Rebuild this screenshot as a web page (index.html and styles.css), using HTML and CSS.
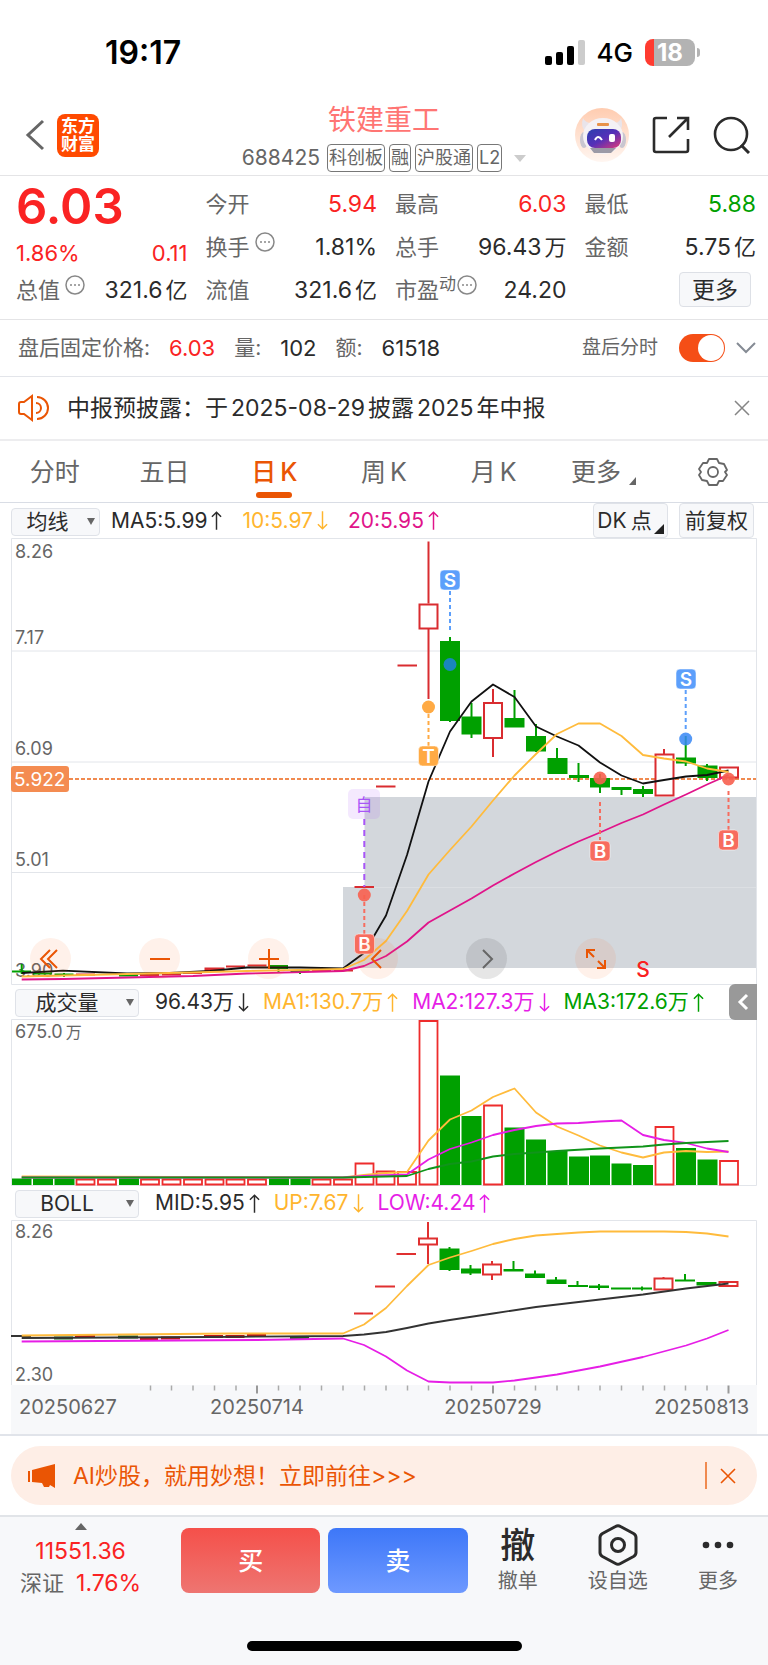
FILE: index.html
```html
<!DOCTYPE html>
<html lang="zh-CN">
<head>
<meta charset="utf-8">
<meta name="viewport" content="width=device-width, initial-scale=1">
<title>铁建重工 688425</title>
<link rel="stylesheet" href="styles.css">
</head>
<body>
<svg class="defs" aria-hidden="true">
  <symbol id="up" viewBox="0 0 12 22"><path d="M6 21V2M1 7l5-5 5 5"/></symbol>
  <symbol id="down" viewBox="0 0 12 22"><path d="M6 1v19M1 15l5 5 5-5"/></symbol>
  <symbol id="info" viewBox="0 0 20 20"><circle cx="10" cy="10" r="9"/><path d="M5 10h2M9 10h2M13 10h2"/></symbol>
</svg>

<div class="status">
  <span class="time">19:17</span>
  <div class="status-right">
    <svg class="signal" width="40" height="26" viewBox="0 0 40 26"><rect x="0" y="16" width="7" height="9" rx="2"/><rect x="11" y="12" width="7" height="13" rx="2"/><rect x="22" y="6" width="7" height="19" rx="2"/><rect x="33" y="0" width="7" height="25" rx="2" fill="#ccc"/></svg>
    <span class="net">4G</span>
    <span class="battery">18</span>
  </div>
</div>

<header class="header">
  <div class="header-left">
    <button class="icon-btn" aria-label="返回"><svg width="20" height="32" viewBox="0 0 20 32"><path d="M18 2 3 16l15 14" fill="none" stroke="#666" stroke-width="3"/></svg></button>
    <span class="logo">东方<br>财富</span>
  </div>
  <div class="header-mid">
    <h1 class="title">铁建重工</h1>
    <div class="tags"><span class="code">688425</span><span class="tag">科创板</span><span class="tag">融</span><span class="tag">沪股通</span><span class="tag">L2</span><span class="tri-down"></span></div>
  </div>
  <div class="header-right">
    <button class="icon-btn" aria-label="助手"><svg width="54" height="56" viewBox="0 0 54 56">
      <defs><linearGradient id="av" x1="0" y1="0" x2="0" y2="1"><stop offset="0" stop-color="#ffccb0"/><stop offset="1" stop-color="#fff6f1"/></linearGradient><linearGradient id="face" x1="0" y1="0" x2="1" y2="1"><stop offset="0" stop-color="#2b3fae"/><stop offset=".5" stop-color="#5530b8"/><stop offset="1" stop-color="#e03a78"/></linearGradient></defs>
      <ellipse cx="27" cy="28" rx="27" ry="27" fill="url(#av)"/>
      <path d="M8 11q-3 9 3 14l8-8Q10 16 8 11zM46 11q3 9-2 14l-8-8q9-1 10-6z" fill="#e9e4ea"/>
      <ellipse cx="9" cy="33" rx="4" ry="8" fill="#c9c6d0"/><ellipse cx="47" cy="33" rx="4" ry="8" fill="#c9c6d0"/>
      <ellipse cx="28" cy="29" rx="20" ry="18" fill="#f4f1f5"/>
      <path d="M15 41h26l-5 5H19z" fill="#9c9aa6"/>
      <rect x="12" y="22" width="34" height="19" rx="8" fill="url(#face)"/>
      <path d="M20 33q3-6 7 0" fill="none" stroke="#fff" stroke-width="2"/><rect x="34" y="27" width="6" height="8" rx="2" fill="#fff"/>
      <rect x="22" y="16" width="12" height="3" rx="1" fill="#e8924a"/></svg></button>
    <button class="icon-btn" aria-label="分享"><svg width="38" height="38" viewBox="0 0 38 38"><path d="M15 2H4a2 2 0 0 0-2 2v30a2 2 0 0 0 2 2h30a2 2 0 0 0 2-2V23M25 2h11v12M36 2 17 21" fill="none" stroke="#2b2b2b" stroke-width="2.6"/></svg></button>
    <button class="icon-btn" aria-label="搜索"><svg width="38" height="38" viewBox="0 0 38 38"><circle cx="18" cy="18" r="16" fill="none" stroke="#2b2b2b" stroke-width="2.6"/><path d="m28 29 8 8" stroke="#2b2b2b" stroke-width="3"/></svg></button>
  </div>
</header>

<section class="quote">
  <div class="price">
    <strong class="last">6.03</strong>
    <div class="change"><span>1.86%</span><span>0.11</span></div>
  </div>
  <div class="cell"><span class="lbl">今开</span><span class="red">5.94</span></div>
  <div class="cell"><span class="lbl">最高</span><span class="red">6.03</span></div>
  <div class="cell"><span class="lbl">最低</span><span class="green">5.88</span></div>
  <div class="cell"><span class="lbl">换手<svg class="info"><use href="#info"/></svg></span><span>1.81%</span></div>
  <div class="cell"><span class="lbl">总手</span><span>96.43<i>万</i></span></div>
  <div class="cell"><span class="lbl">金额</span><span>5.75<i>亿</i></span></div>
  <div class="cell"><span class="lbl">总值<svg class="info"><use href="#info"/></svg></span><span>321.6<i>亿</i></span></div>
  <div class="cell"><span class="lbl">流值</span><span>321.6<i>亿</i></span></div>
  <div class="cell"><span class="lbl">市盈<sup>动</sup><svg class="info tight"><use href="#info"/></svg></span><span>24.20</span></div>
  <div class="cell end"><button class="more">更多</button></div>
</section>

<section class="after">
  <span>盘后固定价格:</span><b class="red">6.03</b><span>量:</span><b>102</b><span>额:</span><b>61518</b>
  <label class="switch-label" for="after-switch">盘后分时</label>
  <input class="switch" type="checkbox" id="after-switch" checked>
  <button class="icon-btn" aria-label="展开"><svg width="20" height="14" viewBox="0 0 20 14"><path d="m1 2 9 9 9-9" fill="none" stroke="#858b94" stroke-width="2"/></svg></button>
</section>

<section class="notice">
  <svg width="31" height="28" viewBox="0 0 31 28" fill="none" stroke="#ea5504" stroke-width="2"><path d="M14 2v24L6 20H3a2 2 0 0 1-2-2v-8a2 2 0 0 1 2-2h3zM18 9a5 5 0 0 1 0 10M19 3a11 11 0 0 1 0 22"/></svg>
  <p>中报预披露：于<span class="num">2025-08-29</span>披露<span class="num">2025</span>年中报</p>
  <button class="icon-btn" aria-label="关闭"><svg width="16" height="16" viewBox="0 0 16 16"><path d="m1 1 14 14M15 1 1 15" stroke="#858585" stroke-width="1.5"/></svg></button>
</section>

<nav class="tabs">
  <button class="tab">分时</button>
  <button class="tab">五日</button>
  <button class="tab on">日<span class="k">K</span></button>
  <button class="tab">周<span class="k">K</span></button>
  <button class="tab">月<span class="k">K</span></button>
  <button class="tab">更多<span class="corner"></span></button>
  <button class="tab" aria-label="设置"><svg width="30" height="30" viewBox="0 0 30 30" fill="none" stroke="#666" stroke-width="1.8"><path d="M11 2h8l2 4 5 1 3 6-2 2 2 3-4 6-4 0-2 4h-8l-2-4-5-1-3-5 2-3-2-3 4-6 4 0z" stroke-linejoin="round"/><circle cx="15" cy="15" r="5"/></svg></button>
</nav>

<main class="charts">
  <div class="bar">
    <span class="pick short"><select aria-label="主图指标"><option>均线</option></select></span>
    <span class="ind">MA5:5.99<svg class="arr"><use href="#up"/></svg></span>
    <span class="ind amber">10:5.97<svg class="arr"><use href="#down"/></svg></span>
    <span class="ind pink">20:5.95<svg class="arr"><use href="#up"/></svg></span>
    <div class="bar-right"><button class="chip">DK<span class="k">点</span><span class="corner dark"></span></button><button class="chip">前复权</button></div>
  </div>

  <div class="plot">
    <svg class="chart" viewBox="11 538 746 447" role="img" aria-label="日K线">
      <g class="grid"><path d="M11.500 538.500h745v446h-745zM12 651h744M12 762h744M12 872.500h744"/></g>
      <path fill="#d3d7dc" d="M343 887h21.500v-90H756v171H343z"/><path stroke="#dcdfe3" d="M365 887.500h391"/>
      <g class="ylab"><text x="15" y="558">8.26</text><text x="15" y="644">7.17</text><text x="15" y="755">6.09</text><text x="15" y="866">5.01</text><text x="15" y="977">3.90</text></g>
      <path d="M69 779h687" stroke="#f08a50" stroke-width="2" stroke-dasharray="4 2"/>
      <g class="gfill"><path d="M440 641h20v80h-20zM461.500 716.500h20v18h-20zM504.500 718h20v9.500h-20zM526 736h20v15.500h-20zM547.500 758h20v16h-20zM569 775h20v3h-20zM590 778h20v9.500h-20zM611.500 787h20v3h-20zM633 789h20v5h-20zM676 757.500h20v6h-20zM697.500 765.500h20v12.500h-20zM12 970.500h19v2H12zM33 972.500h19v2H33zM54.500 973.500h19v2h-19zM119 974.500h19v2h-19zM269 965h19v4h-19zM290.500 970h19v2h-19z"/></g>
      <path class="gline" d="M450 637v85M471.500 703v35M514.500 690v30M536 724v28M557 748v20M578.500 763v19M600 774v19M621.500 787v8M643 786v11M685.700 736v30M707 764v17M21.700 964v10M64 973v4M278.500 965v8M300 969v5"/>
      <g class="rline" stroke-width="2"><path d="M354.500 887h19.500M376 786.500h19.500M397.500 665.500H417M428.500 541.500v62M428.500 628v71M493 689v14M493 738v19M664 749v5M76 974.500h19M140 975h19M162 974.500h19M183 973h19M226 966.500h19M247.500 965.500h19M312 971h19M334 970.500h19"/><path fill="#fff" d="M419.500 604.500h18v24h-18zM484 703h18v35h-18zM655.500 754.500h18v41h-18zM720 767.500h18v10h-18zM205.500 968.500h18v2h-18z"/></g>
      <polyline class="line" stroke="#111" points="21.700,973 63,970.700 127,973.500 170,973 210,971 247,967.500 300,967.500 343,968.500 364,953 386,915.500 407,855 428.500,781.500 450,731.500 471.500,701.500 493,684.500 514.500,697 536,726.500 557,736.500 578.500,745.500 600,762.500 621.500,775.500 643,783.500 664,780 686,776.500 707,775 728.500,770.500"/>
      <polyline class="line" stroke="#ffbb3c" points="21.700,976.500 127,974 210,972 247,971 343,969 364,960 386,941 407,911 428.500,874.500 450,850 471.500,826.500 493,800.500 514.500,775.500 536,754 557,734 578.500,723.500 600,723.500 621.500,736 643,755 664,758.500 686,761.500 707,768.500 728.500,772"/>
      <polyline class="line" stroke="#e0148a" points="21.700,979.500 63,979 193,976 247,973.500 343,971 364,966 386,956 407,941.500 428.500,922.500 450,910.500 471.500,898.500 493,885.500 514.500,873.500 536,862 557,851.500 578.500,841.500 600,832.500 621.500,823 643,814.500 664,804.500 686,794.500 707,784.500 728.500,775"/>
      <rect x="11" y="766" width="58" height="26" rx="3" fill="#f48c51"/><text x="14" y="786" font-size="19" fill="#fff">5.922</text>
      <g fill="none" stroke-width="2" stroke-dasharray="4 3"><path stroke="#5c9ffb" d="M450 591v40M685.700 690v40"/><path stroke="#ffaa44" d="M428.500 707v39"/><path stroke="#f76c5e" d="M364.300 895v40M600 802v38M728.500 791v39"/><path stroke="#a855f7" stroke-dasharray="6 5" d="M364.300 819v68"/></g>
      <circle cx="450" cy="664.500" r="6.500" fill="#1a86bc"/><circle cx="685.700" cy="739" r="6.500" fill="#3787f5" opacity=".85"/><circle cx="428.500" cy="707" r="6.500" fill="#ffaa44"/>
      <g fill="#f8604f" opacity=".9"><circle cx="364.300" cy="895" r="6.500"/><circle cx="600" cy="778" r="6.500"/><circle cx="728.500" cy="779" r="6.500"/></g>
      <g class="mark"><rect x="440" y="570" width="20" height="20" rx="4" fill="#5c9ffb"/><rect x="676" y="669" width="20" height="20" rx="4" fill="#5c9ffb"/><rect x="418.500" y="746" width="20" height="20" rx="4" fill="#ffaa44"/><rect x="354.500" y="934" width="20" height="20" rx="4" fill="#f76c5e"/><rect x="590" y="841" width="20" height="20" rx="4" fill="#f76c5e"/><rect x="718.500" y="830" width="20" height="20" rx="4" fill="#f76c5e"/>
      <text x="450" y="587">S</text><text x="686" y="686">S</text><text x="428.500" y="763">T</text><text x="364.500" y="951">B</text><text x="600" y="858">B</text><text x="728.500" y="847">B</text></g>
      <rect x="348" y="789" width="32" height="30" rx="5" fill="#a855f7" opacity=".13"/><text x="364" y="811" font-size="17" text-anchor="middle" fill="#a855f7">自</text>
      <text x="643" y="977" font-size="21" font-weight="500" text-anchor="middle" fill="#fa2020">S</text>
    </svg>
    <div class="tools">
      <button class="tool" aria-label="最左"><svg width="24" height="24" viewBox="0 0 24 24"><path d="M11 3 2 12l9 9M18 3l-9 9 9 9"/></svg></button>
      <button class="tool" aria-label="缩小"><svg width="24" height="24" viewBox="0 0 24 24"><path d="M2 12h20"/></svg></button>
      <button class="tool" aria-label="放大"><svg width="24" height="24" viewBox="0 0 24 24"><path d="M2 12h20M12 2v20"/></svg></button>
      <button class="tool" aria-label="左移"><svg width="24" height="24" viewBox="0 0 24 24"><path d="m15 3-9 9 9 9"/></svg></button>
      <button class="tool gray" aria-label="右移"><svg width="24" height="24" viewBox="0 0 24 24"><path d="m8 3 9 9-9 9"/></svg></button>
      <button class="tool" aria-label="全屏"><svg width="24" height="24" viewBox="0 0 24 24"><path d="M11 3H3v8M3 3l7 7M21 13v8h-8M21 21l-7-7"/></svg></button>
    </div>
  </div>

  <div class="bar sub">
    <span class="pick"><select aria-label="副图指标一"><option>成交量</option></select></span>
    <span class="ind">96.43万<svg class="arr"><use href="#down"/></svg></span>
    <span class="ind amber">MA1:130.7万<svg class="arr"><use href="#up"/></svg></span>
    <span class="ind violet">MA2:127.3万<svg class="arr"><use href="#down"/></svg></span>
    <span class="ind green">MA3:172.6万<svg class="arr"><use href="#up"/></svg></span>
    <button class="drawer" aria-label="展开侧栏"><svg width="12" height="18" viewBox="0 0 12 18"><path d="M10 2 3 9l7 7" fill="none" stroke="#fff" stroke-width="3"/></svg></button>
  </div>
  <svg class="chart" viewBox="11 1019 746 167" role="img" aria-label="成交量">
    <g class="grid"><path d="M11.500 1019.500h745v166h-745z"/></g>
    <g class="ylab"><text x="15" y="1038">675.0<tspan dx="3" font-size="16">万</tspan></text></g>
    <path class="gfill" d="M12 1178.500h19.500v6.500H12zM33 1178.500h20v6.500H33zM54.500 1178.500h20v6.500h-20zM119 1178.500h20v6.500h-20zM269 1178.500h20v6.500h-20zM290.500 1178.500h20v6.500h-20zM440 1075.500h20V1185h-20zM461.500 1116h20v69h-20zM504.500 1127.500h20v57.500h-20zM526 1139.500h20v45.500h-20zM547.500 1151h20v34h-20zM569 1156.500h20v28.500h-20zM590 1155.500h20v29.500h-20zM611.500 1163.500h20v21.500h-20zM633 1165h20v20h-20zM676 1148h20v37h-20zM697.500 1159.500h20v25.500h-20z"/>
    <path fill="none" stroke="#ee2c2c" stroke-width="1.800" d="M76.500 1179.500h18v5h-18zM98 1179.500h18v5H98zM141 1179.500h18v5h-18zM162.500 1179.500h18v5h-18zM184 1179.500h18v5h-18zM205.500 1179.500h18v5h-18zM226.500 1179.500h18v5h-18zM248 1179.500h18v5h-18zM312.500 1179.500h18v5h-18zM334 1179.500h18v5h-18zM355.500 1163.500h18v21h-18zM376.500 1171.500h18v13h-18zM398 1172h18v12.500h-18zM419.500 1021h18v163.500h-18zM484 1105.500h18v79h-18zM655.500 1127h18v57.500h-18zM720 1161h18v23.500h-18z"/>
    <polyline class="line" stroke="#ffbb3c" points="21.700,1176.500 343,1177.500 364,1175 386,1173 407,1172 428.500,1140.500 450,1119.500 471.500,1110.500 493,1097 514.500,1088.500 536,1112.500 557,1126.500 578.500,1135.500 600,1145.500 621.500,1152.500 643,1157.500 664,1152.500 686,1151 707,1152 728.500,1151.500"/>
    <polyline class="line" stroke="#e61ee6" points="21.700,1177.500 343,1177.500 364,1176 407,1174.500 428.500,1159.500 450,1149 471.500,1142.500 493,1135 514.500,1130 536,1126 557,1123.500 578.500,1123 600,1121.500 621.500,1120.500 643,1135 664,1140 686,1143 707,1148.500 728.500,1152"/>
    <polyline class="line" stroke="#10941a" points="21.700,1177.500 343,1177.500 407,1176 428.500,1169 450,1164 471.500,1161.500 493,1156.500 514.500,1154 536,1152.500 557,1151 600,1148.500 643,1146.500 664,1144.500 686,1143 728.500,1141"/>
  </svg>

  <div class="bar sub">
    <span class="pick"><select aria-label="副图指标二"><option>BOLL</option></select></span>
    <span class="ind">MID:5.95<svg class="arr"><use href="#up"/></svg></span>
    <span class="ind amber">UP:7.67<svg class="arr"><use href="#down"/></svg></span>
    <span class="ind violet">LOW:4.24<svg class="arr"><use href="#up"/></svg></span>
  </div>
  <svg class="chart" viewBox="11 1220 746 214" role="img" aria-label="布林线">
    <g class="grid"><path d="M11.500 1385V1220.500h745V1385"/></g>
    <rect x="11" y="1385" width="746" height="49" fill="#f7f8fa"/>
    <g class="ylab"><text x="15" y="1238">8.26</text><text x="15" y="1381">2.30</text></g>
    <path class="gfill" d="M439.500 1248.500h20v21.500h-20zM461 1268.500h20v5h-20zM503.500 1269h20v2.500h-20zM525 1273.500h20v4.500h-20zM546.500 1279.500h20v4.500h-20zM568 1285h20v2h-20zM589 1285.500h20v2.500h-20zM611 1287.500h20v2h-20zM632 1287.500h20v2h-20zM675 1279.500h20v2h-20zM696.500 1282h20v3.500h-20z"/>
    <path class="gline" d="M449.500 1247v24M470.500 1265v10M513.500 1261v9M535 1270.500v6M556 1277v5M577.500 1281v5M599 1284v6M642 1286.500v4M685 1274v6"/>
    <path fill="none" stroke="#e03030" stroke-width="2" d="M354 1313.500h19M375 1286.500h20M396.500 1254H416M428 1222v16M428 1245v19M419 1238.500h18v6h-18zM492 1261v3M492 1275v5M483 1264.500h18v10h-18zM663.500 1277v2M654.500 1278.500h18v11h-18zM719.500 1282h18v4h-18z"/>
    <path stroke="#333" stroke-width="2" d="M11 1336h20"/><path stroke="#c01818" stroke-width="3" d="M75 1336.500h20M140 1338.500h18M161 1338h19M204 1336.500h19M225.500 1336.500h19M247 1335.500h19"/><path stroke="#186018" stroke-width="3" d="M54 1338h19M118 1337h20M290 1337.500h19"/>
    <polyline class="line" stroke="#ffbb3c" points="21.700,1335.500 230,1333.500 343,1333.500 364,1324.500 386,1308 407,1286 428.500,1265 450,1257.500 471.500,1251 493,1244 514.500,1239 536,1235.500 557,1234 578.500,1232.500 600,1231.500 664,1231.500 686,1232 707,1233.500 728.500,1236.500"/>
    <polyline class="line" stroke="#333" points="21.700,1338 210,1337 343,1336 364,1334.500 386,1332 407,1328 428.500,1323.500 450,1320 493,1313.500 536,1307 600,1299.500 643,1294.500 686,1288.500 728.500,1283.500"/>
    <polyline class="line" stroke="#e61ee6" points="21.700,1341.500 257,1340 343,1338.500 364,1345 386,1356.500 407,1370.500 428.500,1381.500 450,1382.500 493,1382.500 514.500,1380.500 536,1377.500 557,1374.500 600,1366.500 643,1357 686,1345.500 707,1338.500 728.500,1330"/>
    <path stroke="#aaa" stroke-width="1.500" d="M150.500 1385.500v5M171.500 1385.500v5M193 1385.500v5M214.500 1385.500v5M236 1385.500v5M278.500 1385.500v5M300 1385.500v5M321.500 1385.500v5M343 1385.500v5M364.500 1385.500v5M386 1385.500v5M407.500 1385.500v5M428.500 1385.500v5M450 1385.500v5M471.500 1385.500v5M514.500 1385.500v5M535.500 1385.500v5M557 1385.500v5M578.500 1385.500v5M600 1385.500v5M621.500 1385.500v5M643 1385.500v5M664.500 1385.500v5M685.500 1385.500v5M707 1385.500v5"/>
    <path stroke="#999" stroke-width="2" d="M257 1385.500v8M493 1385.500v8M728.500 1385.500v8"/>
    <g class="xlab"><text x="19" y="1414">20250627</text><text x="257" y="1414" text-anchor="middle">20250714</text><text x="493" y="1414" text-anchor="middle">20250729</text><text x="749" y="1414" text-anchor="end">20250813</text></g>
  </svg>
</main>

<section class="banner-wrap">
  <div class="banner">
    <svg width="30" height="26" viewBox="0 0 30 26" fill="#ea5504"><path d="M1 8h2v11H1zM5 7 28 1v24l-5-3-1 2h-5l-2-4-10-1z"/></svg>
    <a class="banner-link" href="#ai">AI炒股，就用妙想！立即前往&gt;&gt;&gt;</a>
    <button class="banner-close" aria-label="关闭广告"><svg width="16" height="16" viewBox="0 0 16 16"><path d="m1 1 14 14M15 1 1 15" stroke="#ea5504" stroke-width="1.600"/></svg></button>
  </div>
</section>

<footer class="dock">
  <div class="dock-row">
    <button class="index"><span class="tri-up"></span><span class="red">11551.36</span><span><span class="lbl">深证</span><span class="red pct">1.76%</span></span></button>
    <button class="trade buy">买</button>
    <button class="trade sell">卖</button>
    <div class="actions">
      <button class="act"><span class="glyph">撤</span>撤单</button>
      <button class="act"><span class="glyph"><svg width="40" height="42" viewBox="0 0 40 42" fill="none" stroke="#2b2b2b" stroke-width="3"><path d="M17.500 2.500q2.500-1.500 5 0l13 7q2.500 1.500 2.500 4v15q0 2.500-2.500 4l-13 7q-2.500 1.500-5 0l-13-7Q2 31 2 28.500v-15Q2 11 4.500 9.500z"/><circle cx="20" cy="21" r="6.500"/></svg></span>设自选</button>
      <button class="act"><span class="glyph"><svg width="32" height="8" viewBox="0 0 32 8" fill="#2b2b2b"><circle cx="4" cy="4" r="3.300"/><circle cx="16" cy="4" r="3.300"/><circle cx="28" cy="4" r="3.300"/></svg></span>更多</button>
    </div>
  </div>
  <div class="home"></div>
</footer>
</body>
</html>
```
FILE: styles.css
```css
* { box-sizing: border-box; }
body { margin: 0; background: #fff; color: #2b2b2b; font: 22px/30px Inter, "Noto Sans CJK SC", sans-serif; }
button { border: 0; padding: 0; margin: 0; background: none; color: inherit; font: inherit; }
svg { display: block; flex: none; }
h1, p { margin: 0; }
.defs { position: absolute; width: 0; height: 0; }
.red { color: #fa2323; }
.green { color: #00a000; }
.amber { color: #ffb52e; }
.pink { color: #e0148a; }
.violet { color: #e61ee6; }
.icon-btn { display: flex; align-items: center; }

.status { display: flex; justify-content: space-between; align-items: center; height: 100px; padding: 5px 73px 0 105px; color: #000; }
.time { font-size: 32px; font-weight: 600; }
.status-right { display: flex; align-items: center; gap: 12px; }
.net { font-size: 26px; font-weight: 500; }
.battery { position: relative; width: 50px; height: 27px; border-radius: 8px; background: linear-gradient(90deg, #ff3b30 9px, #b3b3b3 9px); color: #fff; font-size: 24px; font-weight: 700; line-height: 27px; text-align: center; }
.battery::after { content: ""; position: absolute; right: -5px; top: 9px; width: 3px; height: 9px; border-radius: 0 3px 3px 0; background: #b3b3b3; }

.header { display: grid; grid-template-columns: 1fr auto 1fr; align-items: center; padding: 2px 17px 3px; border-bottom: 1px solid #e4e4e6; }
.header-left { display: flex; align-items: center; gap: 12px; padding: 0 0 4px 8px; }
.logo { width: 42px; height: 43px; padding-top: 3px; border-radius: 8px; background: #ff4a00; color: #fff; font-size: 17px; font-weight: 700; line-height: 18px; text-align: center; }
.header-mid { display: flex; flex-direction: column; align-items: center; gap: 6px; }
.title { color: #ff7573; font-size: 28px; font-weight: 400; line-height: 36px; }
.tags { display: flex; align-items: center; gap: 4px; height: 28px; color: #666; }
.code { margin-right: 3px; font-size: 21px; }
.tag { padding: 0 1px; border: 1px solid #777; border-radius: 4px; font-size: 18px; line-height: 26px; }
.tri-down { margin-left: 8px; border: 6px solid transparent; border-top: 7px solid #ccc; border-bottom: 0; }
.header-right { display: flex; align-items: center; justify-content: flex-end; gap: 23px; padding-bottom: 4px; }

.quote { display: grid; grid-template-columns: repeat(4, 1fr); grid-auto-rows: 43px; column-gap: 18px; padding: 6px 12px 8px 16px; border-bottom: 1px solid #e4e4e6; font-size: 23px; }
.price { grid-row: span 2; color: #fa2323; }
.last { display: block; font-size: 49px; font-weight: 600; line-height: 50px; }
.change { display: flex; justify-content: space-between; padding-top: 6px; font-size: 22px; }
.cell { display: flex; justify-content: space-between; align-items: center; white-space: nowrap; }
.cell i { margin-left: 3px; font-size: 22px; font-style: normal; }
.end { justify-content: flex-end; padding-right: 5px; }
.lbl { display: inline-flex; color: #666; font-size: 22px; }
.lbl sup { font-size: 17px; line-height: 18px; vertical-align: top; }
.info { width: 20px; height: 20px; margin-left: 5px; fill: none; stroke: #888; stroke-width: 1.5; }
.tight { margin-left: 1px; }
.more { width: 72px; height: 35px; border: 1px solid #dde0e6; border-radius: 4px; background: #f7f8fa; line-height: 32px; }

.after { display: flex; align-items: center; height: 57px; padding: 0 12px 0 18px; border-bottom: 1px solid #e3e5ea; color: #666; font-size: 21px; white-space: nowrap; }
.after span { margin-right: 19px; }
.after b { margin-right: 19px; color: #2b2b2b; font-size: 22px; font-weight: 400; }
.after .red { color: #fa2323; }
.switch-label { margin: 0 21px 0 auto; font-size: 19px; }
.switch { position: relative; appearance: none; width: 46px; height: 28px; margin: 0 11px 0 0; border-radius: 14px; background: #f54e16; }
.switch::after { content: ""; position: absolute; right: 1px; top: 1px; width: 26px; height: 26px; border-radius: 50%; background: #fff; }

.notice { display: flex; align-items: center; gap: 18px; height: 64px; padding: 0 18px; border-bottom: 2px solid #ededef; font-size: 23px; }
.notice p { flex: 1; }
.num { margin: 0 3px; }

.tabs { display: grid; grid-template-columns: repeat(7, 1fr); height: 62px; border-bottom: 1px solid #d9dde5; color: #666; font-size: 25px; }
.tab { position: relative; display: flex; align-items: center; justify-content: center; }
.k { margin-left: 4px; }
.on { color: #ea5504; font-weight: 500; }
.on::after { content: ""; position: absolute; bottom: 4px; left: 50%; width: 36px; height: 6px; margin-left: -18px; border-radius: 3px; background: #ea5504; }
.corner { align-self: flex-end; margin: 0 0 17px 8px; border-left: 7px solid transparent; border-bottom: 8px solid #666; }

.charts { padding: 0 11px; border-bottom: 2px solid #e1e4ea; }
.bar { display: flex; align-items: center; gap: 20px; height: 35px; font-size: 21px; }
.sub { position: relative; gap: 14px; height: 34px; padding-left: 4px; }
.pick { position: relative; width: 124px; height: 28px; margin-right: 2px; }
.short { width: 89px; margin-right: -9px; }
.pick select { appearance: none; width: 100%; height: 28px; padding: 0 20px 0 0; border: 1px solid #dfe2e8; border-radius: 4px; background: #f7f8fa; color: #2b2b2b; font: inherit; line-height: 26px; text-align: center; text-align-last: center; }
.short select { padding-right: 16px; }
.pick::after { content: ""; position: absolute; right: 5px; top: 11px; border: 4px solid transparent; border-top: 7px solid #666; border-bottom: 0; }
.ind { display: flex; align-items: center; white-space: nowrap; }
.arr { width: 11px; height: 21px; margin-left: 4px; fill: none; stroke: currentColor; stroke-width: 1.6; }
.bar-right { display: flex; gap: 11px; margin: 0 3px 0 auto; }
.chip { display: flex; align-items: center; justify-content: center; width: 75px; height: 35px; border: 1px solid #dfe2e8; border-radius: 4px; background: #f7f8fa; }
.dark { margin: 0 0 3px 2px; border-left-width: 10px; border-bottom: 10px solid #222; }
.drawer { position: absolute; right: 0; top: -1px; display: flex; align-items: center; justify-content: center; width: 28px; height: 36px; border-radius: 6px 0 0 6px; background: #999; }

.plot { position: relative; }
.chart { width: 100%; height: auto; }
.grid { fill: none; stroke: #e2e5ea; }
.ylab { fill: #666; font-size: 18px; }
.xlab { fill: #666; font-size: 20px; }
.gfill { fill: #00a000; }
.gline { fill: none; stroke: #00a000; stroke-width: 2; }
.rline { fill: none; stroke: #d92c30; }
.line { fill: none; stroke-width: 1.8; stroke-linejoin: round; }
.mark { fill: #fff; font-size: 19px; font-weight: 600; text-anchor: middle; }
.mark rect { stroke: #fff; stroke-opacity: .5; }
.tools { position: absolute; left: 19px; right: 141px; bottom: 6px; display: flex; justify-content: space-between; }
.tool { display: flex; align-items: center; justify-content: center; width: 41px; height: 41px; border-radius: 50%; background: rgba(250, 100, 20, .09); }
.tool svg { fill: none; stroke: #ea5504; stroke-width: 2; }
.gray { background: rgba(80, 80, 80, .14); }
.gray svg { stroke: #666; }

.banner-wrap { padding: 10px 11px; border-bottom: 2px solid #e1e4e8; }
.banner { display: flex; align-items: center; height: 59px; padding: 0 21px 0 16px; border-radius: 30px; background: #feeee6; color: #ea5504; font-size: 23px; }
.banner-link { flex: 1; margin-left: 16px; color: inherit; text-decoration: none; }
.banner-close { display: flex; align-items: center; height: 27px; padding-left: 13px; border-left: 2px solid #f08a50; }

.dock { padding: 11px 0 14px; background: #f7f8fa; }
.dock-row { display: grid; grid-template-columns: 173fr 139fr 139fr 292fr; column-gap: 8px; }
.index { display: flex; flex-direction: column; align-items: center; padding-right: 12px; margin-top: -5px; font-size: 23px; }
.index .red + span { margin-top: 2px; }
.tri-up { margin-bottom: 6px; border: 6px solid transparent; border-bottom: 7px solid #666; border-top: 0; }
.pct { margin-left: 12px; }
.trade { height: 65px; border-radius: 8px; color: #fff; font-size: 25px; font-weight: 500; }
.buy { background: linear-gradient(#f5504a, #ee7571); }
.sell { background: linear-gradient(#3d77f8, #6e99ff); }
.actions { display: grid; grid-template-columns: repeat(3, 1fr); margin-left: -8px; }
.act { display: flex; flex-direction: column; align-items: center; color: #666; font-size: 20px; line-height: 28px; }
.glyph { display: flex; align-items: center; height: 34px; margin-bottom: 5px; color: #2b2b2b; font-size: 35px; font-weight: 500; }
.home { width: 275px; height: 10px; margin: 43px auto 0; border-radius: 5px; background: #000; }
```
